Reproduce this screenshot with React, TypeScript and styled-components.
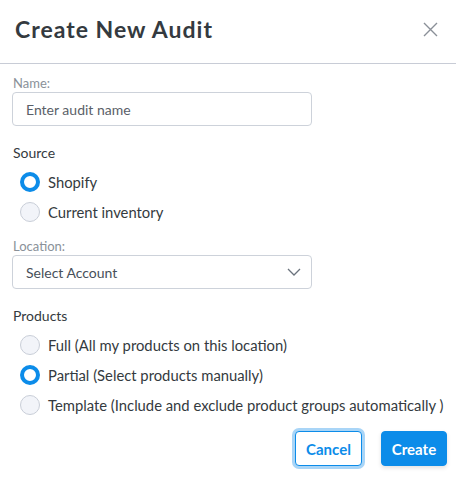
import React, { useState } from 'react';
import styled, { createGlobalStyle } from 'styled-components';

const GlobalStyle = createGlobalStyle`
  body {
    margin: 0;
    background: #ffffff;
    font-family: Lato, 'Open Sans', sans-serif;
    color: #343a40;
  }
  * { box-sizing: border-box; }
`;

const primary = '#0c8ce9';

const Modal = styled.div`
  width: 456px;
  height: 479px;
  background: #fff;
`;

const Header = styled.div`
  display: flex;
  align-items: center;
  justify-content: space-between;
  height: 64px;
  padding: 0 18px 5px 15px;
  border-bottom: 1px solid #c8ccd6;
`;

const Title = styled.h2`
  margin: 0;
  font-size: 23px;
  font-weight: 700;
  color: #343a40;
  letter-spacing: 1px;
`;

const CloseButton = styled.button`
  border: 0;
  background: none;
  padding: 0;
  width: 16px;
  height: 16px;
  display: flex;
  align-items: center;
  justify-content: center;
  cursor: pointer;
`;

const Body = styled.div`
  padding: 11px 12px 0 12px;
`;

const FieldLabel = styled.label<{ $top?: number }>`
  display: block;
  font-size: 13px;
  color: #8a9199;
  margin: ${(p) => p.$top ?? 0}px 0 1px 1px;
  line-height: 16px;
`;

const TextInput = styled.input`
  display: block;
  width: 300px;
  height: 34px;
  border: 1px solid #cdd2da;
  border-radius: 4px;
  padding: 0 13px;
  font-family: inherit;
  font-size: 14px;
  color: #343a40;
  outline: none;
  &::placeholder {
    color: #5a6068;
  }
`;

const SectionTitle = styled.div<{ $top: number }>`
  font-size: 14px;
  color: #343a40;
  margin: ${(p) => p.$top}px 0 10px 1px;
  line-height: 18px;
`;

const RadioList = styled.div`
  display: flex;
  flex-direction: column;
  gap: 10px;
  padding-left: 8px;
`;

const RadioRow = styled.label`
  display: flex;
  align-items: center;
  gap: 8px;
  height: 20px;
  font-size: 14.8px;
  color: #343a40;
  cursor: pointer;
  white-space: nowrap;
`;

const RadioDot = styled.span<{ $checked: boolean }>`
  width: 20px;
  height: 20px;
  border-radius: 50%;
  flex-shrink: 0;
  background: ${(p) => (p.$checked ? '#fff' : '#f2f4f9')};
  border: ${(p) => (p.$checked ? `4px solid ${primary}` : '1.5px solid #c9ced8')};
`;

const SelectBox = styled.div`
  width: 300px;
  height: 34px;
  border: 1px solid #cdd2da;
  border-radius: 4px;
  padding: 0 10px 0 13px;
  display: flex;
  align-items: center;
  justify-content: space-between;
  font-size: 14px;
  color: #47505a;
`;

const Footer = styled.div`
  display: flex;
  justify-content: flex-end;
  gap: 19px;
  padding: 16px 9px 0 0;
`;

const Button = styled.button<{ $variant: 'outline' | 'solid'; $width: number }>`
  width: ${(p) => p.$width}px;
  height: 35px;
  padding: 0;
  border-radius: 4px;
  font-family: inherit;
  font-size: 15px;
  font-weight: 700;
  cursor: pointer;
  border: 1px solid ${primary};
  color: ${(p) => (p.$variant === 'solid' ? '#fff' : primary)};
  background: ${(p) => (p.$variant === 'solid' ? primary : '#fff')};
  box-shadow: ${(p) =>
    p.$variant === 'outline'
      ? '0 0 0 3px #a9d5f7'
      : '0 2px 4px rgba(0, 0, 0, 0.12)'};
`;

const Radio = ({
  label,
  checked,
  onSelect,
}: {
  label: string;
  checked: boolean;
  onSelect: () => void;
}) => (
  <RadioRow onClick={onSelect}>
    <RadioDot $checked={checked} />
    {label}
  </RadioRow>
);

const sources = ['Shopify', 'Current inventory'];
const products = [
  'Full (All my products on this location)',
  'Partial (Select products manually)',
  'Template (Include and exclude product groups automatically )',
];

export default function App() {
  const [source, setSource] = useState(0);
  const [product, setProduct] = useState(1);

  return (
    <>
      <GlobalStyle />
      <Modal>
        <Header>
          <Title>Create New Audit</Title>
          <CloseButton aria-label="Close">
            <svg width="15" height="15" viewBox="0 0 15 15">
              <path d="M1 1 L14 14 M14 1 L1 14" stroke="#8a9098" strokeWidth="1.4" />
            </svg>
          </CloseButton>
        </Header>
        <Body>
          <FieldLabel>Name:</FieldLabel>
          <TextInput placeholder="Enter audit name" />

          <SectionTitle $top={18}>Source</SectionTitle>
          <RadioList>
            {sources.map((s, i) => (
              <Radio key={s} label={s} checked={source === i} onSelect={() => setSource(i)} />
            ))}
          </RadioList>

          <FieldLabel $top={16}>Location:</FieldLabel>
          <SelectBox>
            Select Account
            <svg width="14" height="8" viewBox="0 0 14 8">
              <path d="M1 1 L7 7 L13 1" fill="none" stroke="#6b737d" strokeWidth="1.3" />
            </svg>
          </SelectBox>

          <SectionTitle $top={18}>Products</SectionTitle>
          <RadioList>
            {products.map((s, i) => (
              <Radio key={s} label={s} checked={product === i} onSelect={() => setProduct(i)} />
            ))}
          </RadioList>
        </Body>
        <Footer>
          <Button $variant="outline" $width={67}>Cancel</Button>
          <Button $variant="solid" $width={66}>Create</Button>
        </Footer>
      </Modal>
    </>
  );
}
